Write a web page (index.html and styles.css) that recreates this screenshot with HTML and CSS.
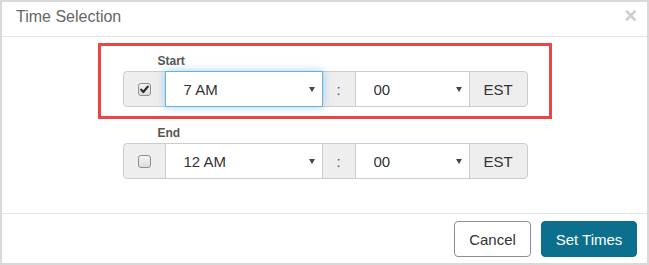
FILE: index.html
```html
<!DOCTYPE html>
<html lang="en">
<head>
	<meta charset="UTF-8">
	<title>Time Selection</title>
	<link rel="stylesheet" href="styles.css">
</head>
<body>
	<div class="modal">
		<div class="modal-header">
			<h4 class="modal-title">Time Selection</h4>
			<button class="close" type="button">&times;</button>
		</div>

		<div class="modal-body">
			<!-- start time, outlined -->
			<div class="highlight">
				<div class="time-field">
					<label class="time-label">Start</label>
					<div class="input-group">
						<span class="addon check-addon">
							<span class="check">
								<svg width="11" height="11" viewBox="0 0 11 11"><path d="M2.2 5.6 L4.3 8 L8.8 2.6" fill="none" stroke="#2b2b2b" stroke-width="2.2" stroke-linecap="round" stroke-linejoin="round"/></svg>
							</span>
						</span>
						<div class="select-wrap hours focus">
							<select><option>7 AM</option></select>
						</div>
						<span class="addon colon">:</span>
						<div class="select-wrap minutes">
							<select><option>00</option></select>
						</div>
						<span class="addon zone">EST</span>
					</div>
				</div>
			</div>

			<!-- end time -->
			<div class="time-field end">
				<label class="time-label">End</label>
				<div class="input-group">
					<span class="addon check-addon">
						<span class="check"></span>
					</span>
					<div class="select-wrap hours">
						<select><option>12 AM</option></select>
					</div>
					<span class="addon colon">:</span>
					<div class="select-wrap minutes">
						<select><option>00</option></select>
					</div>
					<span class="addon zone">EST</span>
				</div>
			</div>
		</div>

		<div class="modal-footer">
			<button class="btn btn-default" type="button">Cancel</button>
			<button class="btn btn-primary" type="button">Set Times</button>
		</div>
	</div>
</body>
</html>
```

FILE: styles.css
```css
body{
	margin: 0;
	font-family: "Liberation Sans", Arial, sans-serif;
	color: #333;
}
.modal{
	width: 649px;
	height: 265px;
	box-sizing: border-box;
	border: 2px solid #d9d9d9;
	background: #fff;
	display: flex;
	flex-direction: column;
}
.modal-header{
	display: flex;
	justify-content: space-between;
	align-items: flex-start;
	padding: 4px 10px 8px 14px;
	border-bottom: 1px solid #e5e5e5;
}
.modal-title{
	margin: 0;
	font-size: 16px;
	font-weight: normal;
	line-height: 22px;
	color: #666;
}
.close{
	margin-top: 0;
	padding: 0;
	border: 0;
	background: none;
	font-family: "Liberation Sans", Arial, sans-serif;
	font-size: 22px;
	font-weight: bold;
	line-height: 20px;
	color: #cdcdcd;
	cursor: pointer;
}
.modal-body{
	flex: 1;
	padding: 6px 0 0 1px;
}
.highlight{
	width: 454px;
	box-sizing: border-box;
	margin: 0 auto;
	padding: 7px 0 9px;
	border: 3px solid #ea4646;
}
.time-field{
	width: 405px;
	margin: 0 auto;
}
.time-field.end{
	margin-top: 6px;
}
.time-label{
	display: block;
	margin: 0 0 1px 35px;
	font-size: 12px;
	font-weight: bold;
	line-height: 17px;
	color: #555;
}
.input-group{
	display: flex;
	height: 36px;
}
.input-group > *{
	box-sizing: border-box;
	height: 36px;
	margin-left: -1px;
	border: 1px solid #ccc;
}
.input-group > *:first-child{
	margin-left: 0;
	border-radius: 4px 0 0 4px;
}
.input-group > *:last-child{
	border-radius: 0 4px 4px 0;
}
.addon{
	display: flex;
	align-items: center;
	justify-content: center;
	background: #eee;
	font-size: 15px;
	color: #555;
}
.check-addon{
	width: 43px;
}
.colon{
	width: 34px;
}
.zone{
	width: 59px;
	color: #333;
}
.check{
	display: flex;
	align-items: center;
	justify-content: center;
	width: 13px;
	height: 13px;
	box-sizing: border-box;
	border: 1px solid #8e8e8e;
	border-radius: 3px;
	background: linear-gradient(#f4f4f4, #dcdcdc);
}
.select-wrap{
	position: relative;
	background: #fff;
}
.select-wrap.hours{
	width: 158px;
}
.select-wrap.minutes{
	width: 115px;
}
.select-wrap.focus{
	z-index: 2;
	border-color: #66afe9;
	box-shadow: 0 0 8px rgba(102, 175, 233, .6);
}
.select-wrap select{
	-webkit-appearance: none;
	appearance: none;
	width: 100%;
	height: 100%;
	padding: 0 18px;
	border: 0;
	outline: none;
	background: transparent;
	font-family: "Liberation Sans", Arial, sans-serif;
	font-size: 15px;
	color: #333;
}
.select-wrap::after{
	content: "";
	position: absolute;
	right: 7px;
	top: 15px;
	border-left: 3px solid transparent;
	border-right: 3px solid transparent;
	border-top: 5px solid #444;
	pointer-events: none;
}
.modal-footer{
	display: flex;
	justify-content: flex-end;
	gap: 10px;
	padding: 7px 10px 6px;
	border-top: 1px solid #e5e5e5;
}
.btn{
	height: 36px;
	box-sizing: border-box;
	padding: 0;
	border-radius: 4px;
	font-family: "Liberation Sans", Arial, sans-serif;
	font-size: 15px;
	white-space: nowrap;
	cursor: pointer;
}
.btn-default{
	width: 77px;
	border: 1px solid #8f8f8f;
	background: #fff;
	color: #333;
}
.btn-primary{
	width: 96px;
	border: 1px solid #0b6d8a;
	background: #0b6f8d;
	color: #fff;
}
```
